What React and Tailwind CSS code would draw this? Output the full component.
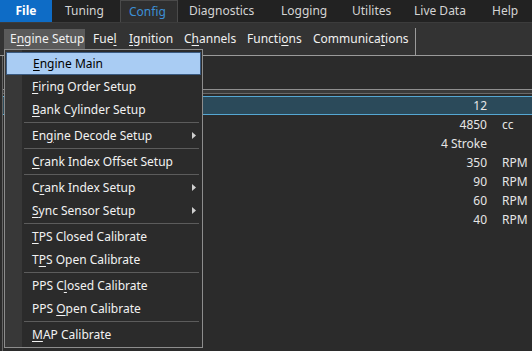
import React from 'react';

const font = "font-['Noto_Sans','Open_Sans',sans-serif]";

// text with one underlined mnemonic letter
const Mn = ({ text, at }) => (
    <span>
        {text.slice(0, at)}
        <span className="underline underline-offset-2">{text[at]}</span>
        {text.slice(at + 1)}
    </span>
);

const topTabs = [
    { label: 'Tuning', w: 'w-[68px]', pl: 'pl-[13px]' },
    { label: 'Config', w: 'w-[58px]', pl: 'pl-[8px]', active: true },
    { label: 'Diagnostics', w: 'w-[86px]', pl: 'pl-[11px]' },
    { label: 'Logging', w: 'w-[73px]', pl: 'pl-[17px]' },
    { label: 'Utilites', w: 'w-[63px]', pl: 'pl-[15px]' },
    { label: 'Live Data', w: 'w-[75px]', pl: 'pl-[14px]' },
    { label: 'Help', w: 'w-[57px]', pl: 'pl-[17px]' },
];

const toolItems = [
    { text: 'Fuel', at: 3, w: 'w-[37px]', pl: 'pl-[8px]' },
    { text: 'Ignition', at: 0, w: 'w-[55px]', pl: 'pl-[7px]' },
    { text: 'Channels', at: 1, w: 'w-[63px]', pl: 'pl-[7px]' },
    { text: 'Functions', at: 6, w: 'w-[66px]', pl: 'pl-[7px]' },
    { text: 'Communications', at: 9, w: 'w-[107px]', pl: 'pl-[7px]' },
];

const menu = [
    { text: 'Engine Main', at: 0, hot: true },
    { text: 'Firing Order Setup', at: 0 },
    { text: 'Bank Cylinder Setup', at: 0 },
    'sep',
    { text: 'Engine Decode Setup', at: 2, sub: true },
    'sep',
    { text: 'Crank Index Offset Setup', at: 0 },
    'sep',
    { text: 'Crank Index Setup', at: 1, sub: true },
    { text: 'Sync Sensor Setup', at: 0, sub: true },
    'sep',
    { text: 'TPS Closed Calibrate', at: 0 },
    { text: 'TPS Open Calibrate', at: 1 },
    'sep',
    { text: 'PPS Closed Calibrate', at: 5 },
    { text: 'PPS Open Calibrate', at: 4 },
    'sep',
    { text: 'MAP Calibrate', at: 0 },
];

const rows = [
    { v: '12', u: '', sel: true },
    { v: '4850', u: 'cc' },
    { v: '4 Stroke', u: '' },
    { v: '350', u: 'RPM' },
    { v: '90', u: 'RPM' },
    { v: '60', u: 'RPM' },
    { v: '40', u: 'RPM' },
];

export default function App() {
    return (
        <div className={`relative w-[532px] h-[351px] overflow-hidden bg-[#2b2b2b] text-[12px] text-[#e6e6e6] flex flex-col ${font}`}>
            {/* menu bar */}
            <div className="h-[23px] flex items-stretch bg-[#222222] border-b border-[#3c3c3c]">
                <div className="w-[52px] bg-[#0e6cc6] text-white font-bold flex items-center justify-center">File</div>
                {topTabs.map(t => (
                    <div key={t.label}
                        className={`${t.w} ${t.pl} flex items-center ${t.active ? 'bg-[#2f2f2f] border-x border-t border-[#4a4a4a] text-[#3d8fd6]' : 'text-[#d4d4d4]'}`}>
                        {t.label}
                    </div>
                ))}
            </div>

            {/* toolbar */}
            <div className="h-[33px] flex items-center bg-[#333333] border-b border-[#9a9a9a]">
                <div className="ml-[4px] w-[81px] h-[21px] bg-[#5a5a5a] flex items-center pl-[6px] text-[#f0f0f0]">
                    <Mn text="Engine Setup" at={1} />
                </div>
                {toolItems.map(t => (
                    <div key={t.text} className={`${t.w} ${t.pl} text-[#f0f0f0]`}>
                        <Mn text={t.text} at={t.at} />
                    </div>
                ))}
                <div className="ml-[2px] w-px h-[27px] self-end bg-[#9a9a9a]" />
            </div>

            {/* grid area */}
            <div className="flex-1 flex flex-col border-l border-[#666666] ml-[2px]">
                <div className="h-[33px]" />
                <div className="h-[5px] bg-[#3a3a3a] border-t border-b border-t-[#8f8f8f] border-b-[#6a6a6a]" />
                <div className="h-[2px]" />
                {rows.map((r, i) => (
                    <div key={i}
                        className={`h-[19px] flex items-center ${r.sel ? 'bg-[#2b4a5a] border-y border-[#55a7d3]' : ''}`}>
                        <div className="flex-1 text-right">{r.v}</div>
                        <div className="w-[45px] pl-[15px]">{r.u}</div>
                    </div>
                ))}
            </div>

            {/* dropdown menu */}
            <div className="absolute left-[4px] top-[49px] w-[199px] h-[299px] bg-[#2b2b2b] border border-[#8d8d8d] flex">
                <div className="w-[17px] bg-[#383838]" />
                <div className="flex-1 flex flex-col pt-[2px] -ml-[17px]">
                    {menu.map((m, i) => m === 'sep' ? (
                        <div key={i} className="h-[3px] flex items-center pl-[19px] pr-[3px]">
                            <div className="h-px w-full bg-[#5c5c5c]" />
                        </div>
                    ) : (
                        <div key={i}
                            className={`relative h-[23px] flex items-center pl-[26px] mx-[1px] ${m.hot ? 'bg-[#a9ccf3] border border-[#3a5a80] text-black pl-[25px]' : 'text-[#f2f2f2]'}`}>
                            <Mn text={m.text} at={m.at} />
                            {m.sub && (
                                <svg className="absolute right-[5px] top-[8px]" width="4" height="7" viewBox="0 0 4 7">
                                    <path d="M0 0 L4 3.5 L0 7 Z" fill="#cfcfcf" />
                                </svg>
                            )}
                        </div>
                    ))}
                </div>
            </div>
        </div>
    );
}
